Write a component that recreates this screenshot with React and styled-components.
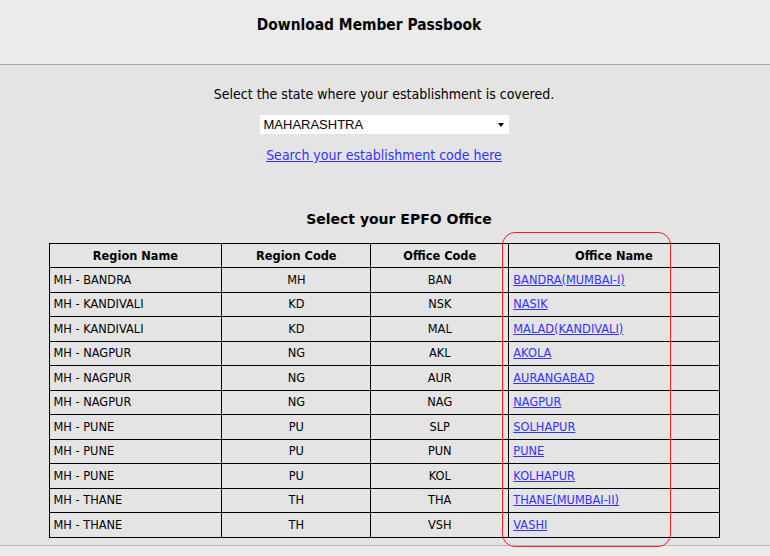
import React from 'react';
import styled, { createGlobalStyle } from 'styled-components';

const GlobalStyle = createGlobalStyle`
  html, body {
    margin: 0;
    padding: 0;
    background: #e4e4e4;
  }
  body {
    font-family: "DejaVu Sans", Verdana, sans-serif;
    color: #000;
  }
`;

const Header = styled.div`
  height: 65px;
  background: #ebebeb;
  border-bottom: 1px solid #aaaaaa;
  box-sizing: border-box;
  padding: 16px 32px 0 0;
  text-align: center;
`;

const Title = styled.h1`
  margin: 0;
  font-family: "DejaVu Sans Condensed", Tahoma, sans-serif;
  font-weight: bold;
  font-size: 15.4px;
  line-height: 18px;
`;

const Content = styled.div`
  height: 481px;
  background: #e4e4e4;
  border-bottom: 1px solid #bbbbbb;
  box-sizing: border-box;
  padding: 20px 2px 0 0;
  display: flex;
  flex-direction: column;
  align-items: center;
`;

const Prompt = styled.p`
  margin: 0;
  font-family: "DejaVu Sans Condensed", Tahoma, sans-serif;
  font-size: 14px;
  line-height: 19px;
`;

const StateSelect = styled.div`
  margin-top: 11px;
  width: 249px;
  height: 19px;
  background: #fff;
  box-sizing: border-box;
  display: flex;
  align-items: center;
  justify-content: space-between;
  padding: 0 5px 0 4px;
  font-family: "Liberation Sans", Arial, sans-serif;
  font-size: 13px;
`;

const Caret = styled.span`
  width: 0;
  height: 0;
  border-left: 3.5px solid transparent;
  border-right: 3.5px solid transparent;
  border-top: 4px solid #000;
`;

const SearchLink = styled.a`
  margin-top: 12px;
  font-family: "DejaVu Sans Condensed", Tahoma, sans-serif;
  font-size: 14px;
  line-height: 19px;
  color: #3333ff;
  text-decoration: underline;
`;

const SubTitle = styled.h2`
  margin: 45px 0 0;
  padding-left: 30px;
  font-size: 14px;
  line-height: 18px;
  font-weight: bold;
`;

const TableWrap = styled.div`
  position: relative;
  margin-top: 15px;
`;

const Table = styled.table`
  width: 671px;
  border-collapse: collapse;
  font-size: 11.4px;
`;

const Th = styled.th`
  border: 1px solid #000;
  height: 23px;
  padding: 0 4px;
  font-weight: bold;
  text-align: center;
  width: ${p => p.w}px;
`;

const Td = styled.td`
  border: 1px solid #000;
  height: 23.5px;
  padding: 0 4px;
  text-align: ${p => (p.center ? 'center' : 'left')};
`;

const OfficeLink = styled.a`
  color: #3333ff;
  text-decoration: underline;
`;

const Highlight = styled.div`
  position: absolute;
  left: 453px;
  top: -11px;
  width: 169px;
  height: 315px;
  border: 1px solid #ff2020;
  border-radius: 13px;
  box-sizing: border-box;
  pointer-events: none;
`;

const Footer = styled.div`
  height: 10px;
  background: #ebebeb;
`;

const offices = [
  ['MH - BANDRA', 'MH', 'BAN', 'BANDRA(MUMBAI-I)'],
  ['MH - KANDIVALI', 'KD', 'NSK', 'NASIK'],
  ['MH - KANDIVALI', 'KD', 'MAL', 'MALAD(KANDIVALI)'],
  ['MH - NAGPUR', 'NG', 'AKL', 'AKOLA'],
  ['MH - NAGPUR', 'NG', 'AUR', 'AURANGABAD'],
  ['MH - NAGPUR', 'NG', 'NAG', 'NAGPUR'],
  ['MH - PUNE', 'PU', 'SLP', 'SOLHAPUR'],
  ['MH - PUNE', 'PU', 'PUN', 'PUNE'],
  ['MH - PUNE', 'PU', 'KOL', 'KOLHAPUR'],
  ['MH - THANE', 'TH', 'THA', 'THANE(MUMBAI-II)'],
  ['MH - THANE', 'TH', 'VSH', 'VASHI'],
];

export default function App() {
  return (
    <>
      <GlobalStyle />
      <Header>
        <Title>Download Member Passbook</Title>
      </Header>
      <Content>
        <Prompt>Select the state where your establishment is covered.</Prompt>
        <StateSelect>
          <span>MAHARASHTRA</span>
          <Caret />
        </StateSelect>
        <SearchLink href="#">Search your establishment code here</SearchLink>
        <SubTitle>Select your EPFO Office</SubTitle>
        <TableWrap>
          <Table>
            <thead>
              <tr>
                <Th w={174}>Region Name</Th>
                <Th w={149}>Region Code</Th>
                <Th w={138}>Office Code</Th>
                <Th w={210}>Office Name</Th>
              </tr>
            </thead>
            <tbody>
              {offices.map((o, i) => (
                <tr key={i}>
                  <Td>{o[0]}</Td>
                  <Td center>{o[1]}</Td>
                  <Td center>{o[2]}</Td>
                  <Td>
                    <OfficeLink href="#">{o[3]}</OfficeLink>
                  </Td>
                </tr>
              ))}
            </tbody>
          </Table>
          <Highlight />
        </TableWrap>
      </Content>
      <Footer />
    </>
  );
}
